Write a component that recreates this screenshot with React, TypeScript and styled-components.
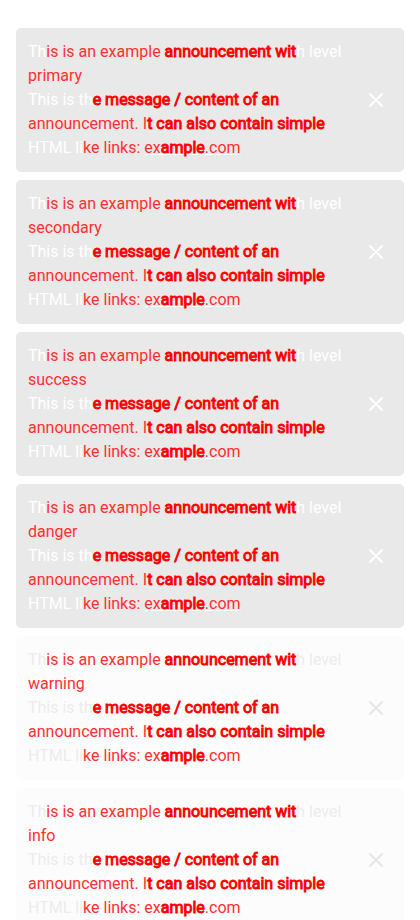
import React from "react";
import styled, { createGlobalStyle } from "styled-components";

const Global = createGlobalStyle`
  html, body { margin: 0; padding: 0; background: #ffffff; }
  body { font-family: Roboto, "Liberation Sans", sans-serif; }
`;

const Page = styled.div`
  display: flex;
  flex-direction: column;
  gap: 8px;
  padding: 28px 16px;
`;

const Card = styled.div<{ $muted?: boolean }>`
  display: flex;
  align-items: center;
  gap: 12px;
  padding: 12px;
  border-radius: 5px;
  background: ${(p) => (p.$muted ? "#fcfcfc" : "#e9e9e9")};
  color: ${(p) => (p.$muted ? "#ececec" : "#ffffff")};
`;

const Body = styled.div`
  flex: 1;
  font-size: 16px;
  line-height: 24px;
  max-width: 324px;
`;

const Line = styled.div``;

const Red = styled.span<{ $bold?: boolean }>`
  color: ${(p) => (p.$bold ? "#ff0000" : "#ff3030")};
  -webkit-text-stroke: ${(p) => (p.$bold ? "0.9px #ff0000" : "0")};
`;

const Link = styled.a`
  color: inherit;
  text-decoration: underline;
  text-decoration-color: #ffffff;
`;

const Close = styled.button<{ $muted?: boolean }>`
  width: 24px;
  height: 24px;
  padding: 0;
  margin-right: 4px;
  border: none;
  background: transparent;
  display: flex;
  align-items: center;
  justify-content: center;
  color: ${(p) => (p.$muted ? "#e6e6e6" : "#ffffff")};
`;

const levels = [
  { name: "primary", muted: false },
  { name: "secondary", muted: false },
  { name: "success", muted: false },
  { name: "danger", muted: false },
  { name: "warning", muted: true },
  { name: "info", muted: true },
];

function Announcement({ name, muted }: { name: string; muted: boolean }) {
  return (
    <Card $muted={muted}>
      <Body>
        <Line>
          Th<Red>is is an example </Red>
          <Red $bold>announcement wit</Red>h level <Red>{name}</Red>
        </Line>
        <Line>
          This is th<Red $bold>e message / content of an</Red>{" "}
          <Red>announcement. I</Red>
          <Red $bold>t can also contain simple</Red> HTML li
          <Red>ke links: </Red>
          <Link href="#">
            <Red>ex</Red>
            <Red $bold>ample</Red>
            <Red>.com</Red>
          </Link>
        </Line>
      </Body>
      <Close $muted={muted} aria-label="Close">
        <svg width="16" height="16" viewBox="0 0 16 16" fill="none">
          <path d="M1.5 1.5L14.5 14.5M14.5 1.5L1.5 14.5" stroke="currentColor" strokeWidth="2" />
        </svg>
      </Close>
    </Card>
  );
}

export default function App() {
  return (
    <>
      <Global />
      <Page>
        {levels.map((l) => (
          <Announcement key={l.name} name={l.name} muted={l.muted} />
        ))}
      </Page>
    </>
  );
}
